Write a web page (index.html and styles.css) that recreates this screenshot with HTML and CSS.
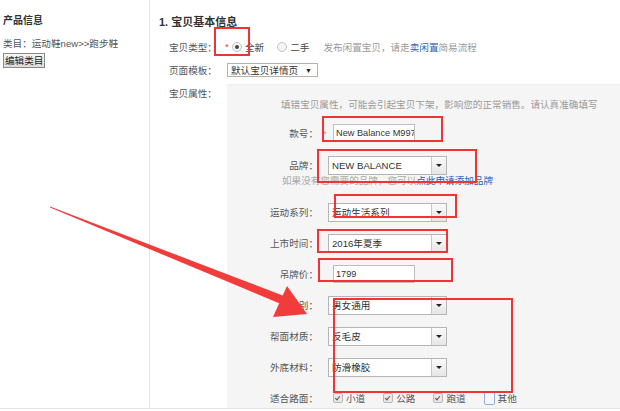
FILE: index.html
```html
<!DOCTYPE html>
<html lang="zh-CN">
<head>
  <meta charset="UTF-8">
  <title>发布宝贝</title>
  <link rel="stylesheet" href="styles.css">
</head>
<body>

  <div class="page">
    <div class="side">
      <h4 class="side__title">产品信息</h4>
      <p class="side__cat">类目：运动鞋new&gt;&gt;跑步鞋</p>
      <button class="btn-edit">编辑类目</button>
    </div>

    <div class="main">
      <h3 class="main__title">1. 宝贝基本信息</h3>

      <div class="row row--type">
        <span class="row__label">宝贝类型：</span>
        <span class="req">*</span>
        <span class="radio radio--on"></span><span class="opt">全新</span>
        <span class="radio"></span><span class="opt">二手</span>
        <span class="tip">发布闲置宝贝，请走<a class="link">卖闲置</a>简易流程</span>
      </div>

      <div class="row row--tpl">
        <span class="row__label">页面模板：</span>
        <span class="tpl-select">默认宝贝详情页<i class="tpl-arrow">▼</i></span>
      </div>

      <div class="props">
        <span class="row__label props__label">宝贝属性：</span>
        <div class="panel">
          <p class="panel__tip">填错宝贝属性，可能会引起宝贝下架，影响您的正常销售。请认真准确填写</p>

          <div class="field field--first">
            <span class="field__label">款号：</span>
            <span class="field__star">*</span>
            <span class="text-input">New Balance M997</span>
          </div>

          <div class="field field--brand">
            <span class="field__label">品牌：</span>
            <span class="select select--latin">NEW BALANCE<i class="select__btn"></i></span>
          </div>
          <p class="brand-tip">如果没有您需要的品牌，您可以<a class="link">点此申请添加品牌</a></p>

          <div class="field field--series">
            <span class="field__label">运动系列：</span>
            <span class="select">运动生活系列<i class="select__btn"></i></span>
          </div>

          <div class="field">
            <span class="field__label">上市时间：</span>
            <span class="select">2016年夏季<i class="select__btn"></i></span>
          </div>

          <div class="field">
            <span class="field__label">吊牌价：</span>
            <span class="field__star"></span>
            <span class="text-input">1799</span>
          </div>

          <div class="field">
            <span class="field__label">性别：</span>
            <span class="select">男女通用<i class="select__btn"></i></span>
          </div>

          <div class="field">
            <span class="field__label">帮面材质：</span>
            <span class="select">反毛皮<i class="select__btn"></i></span>
          </div>

          <div class="field">
            <span class="field__label">外底材料：</span>
            <span class="select">防滑橡胶<i class="select__btn"></i></span>
          </div>

          <div class="field">
            <span class="field__label">适合路面：</span>
            <span class="checks">
              <span class="check check--on"></span><span class="check__text">小道</span>
              <span class="check check--on"></span><span class="check__text">公路</span>
              <span class="check check--on"></span><span class="check__text">跑道</span>
              <span class="check check--focus"></span><span class="check__text">其他</span>
            </span>
          </div>
        </div>
      </div>
    </div>
  </div>

  <!-- annotations drawn over the screenshot -->
  <div class="mark" style="left:214px; top:27px; width:32px; height:25px;"></div>
  <div class="mark" style="left:322px; top:116px; width:117px; height:22px;"></div>
  <div class="mark" style="left:317px; top:149px; width:156px; height:30px;"></div>
  <div class="mark" style="left:334px; top:194px; width:119px; height:20px;"></div>
  <div class="mark" style="left:317px; top:229px; width:127px; height:20px;"></div>
  <div class="mark" style="left:318px; top:258px; width:131px; height:20px;"></div>
  <div class="mark" style="left:333px; top:298px; width:176px; height:91px;"></div>

  <svg class="arrow" width="620" height="411" viewBox="0 0 620 411">
    <polygon points="50,206.5 284,296 281,304 50,207.5" fill="#f23b3b"/>
    <polygon points="307,314 273,317 287,286" fill="#f23b3b"/>
  </svg>

</body>
</html>
```

FILE: styles.css
```css
body {
  margin: 0;
  position: relative;
  width: 620px;
  height: 411px;
  overflow: hidden;
  background: #fff;
  font-family: "Liberation Sans", "Noto Sans CJK SC", sans-serif;
  font-size: 9.6px;
  color: #444;
}

p, h3, h4 {
  margin: 0;
}

.link {
  color: #2f5fb8;
}

.page {
  display: flex;
  height: 408px;
  border-bottom: 1px solid #e3e3e3;
}

/* left column */
.side {
  width: 150px;
  padding: 15px 0 0 3px;
  box-sizing: border-box;
  border-right: 1px solid #dfe5f0;
}

.side__title {
  font-size: 10px;
  font-weight: bold;
  color: #333;
  line-height: 12px;
}

.side__cat {
  margin-top: 11px;
  line-height: 12px;
  color: #555;
}

.btn-edit {
  margin-top: 3px;
  padding: 0 1px;
  height: 15px;
  font-family: inherit;
  font-size: 9.6px;
  line-height: 13px;
  color: #222;
  border: 1px solid #8a8a8a;
  background: linear-gradient(#f6f6f6, #dcdcdc);
}

/* right column */
.main {
  flex: 1;
  display: flex;
  flex-direction: column;
  padding-left: 9px;
}

.main__title {
  margin-top: 15px;
  font-size: 11px;
  line-height: 14px;
  font-weight: bold;
  color: #333;
}

.row {
  display: flex;
  align-items: center;
  padding-left: 10px;
}

.row__label {
  width: 58px;
  flex-shrink: 0;
  color: #555;
}

.row--type {
  margin-top: 8px;
  height: 20px;
}

.row--type .row__label {
  width: 56px;
}

.req {
  color: #e33;
  width: 7px;
}

.radio {
  width: 8px;
  height: 8px;
  border: 1px solid #c3c3c3;
  border-radius: 50%;
  background: #f4f4f4;
  position: relative;
}

.radio--on::after {
  content: "";
  position: absolute;
  left: 2px;
  top: 2px;
  width: 4px;
  height: 4px;
  border-radius: 50%;
  background: #444;
}

.opt {
  margin: 0 13px 0 3px;
  color: #444;
}

.tip {
  margin-left: 1px;
  color: #999;
}

.row--tpl {
  margin-top: 4px;
  height: 20px;
}

.tpl-select {
  display: flex;
  align-items: center;
  width: 91px;
  height: 14px;
  box-sizing: border-box;
  padding-left: 3px;
  border: 1px solid #b2b2b2;
  background: #fff;
  color: #333;
}

.tpl-arrow {
  font-style: normal;
  font-size: 7px;
  margin-left: auto;
  margin-right: 5px;
  color: #222;
}

.props {
  flex: 1;
  display: flex;
  margin-top: 4px;
  padding-left: 10px;
}

.props__label {
  margin-top: 4px;
  line-height: 12px;
}

.panel {
  flex: 1;
  background: #f5f5f5;
  border-top: 1px solid #eee;
  padding-top: 13px;
}

.panel__tip {
  padding-left: 54px;
  line-height: 14px;
  color: #9a9a9a;
}

.field {
  display: flex;
  align-items: center;
  height: 20px;
  margin-top: 11px;
}

.field--first {
  margin-top: 11px;
}

.field--brand {
  margin-top: 12px;
}

.field--series {
  margin-top: 15px;
}

.field__label {
  width: 91px;
  text-align: right;
  color: #555;
  flex-shrink: 0;
}

.field__star {
  width: 15px;
  padding-left: 5px;
  box-sizing: border-box;
  color: #f08080;
}

.brand-tip {
  padding-left: 55px;
  line-height: 12px;
  color: #aaa;
}

.text-input {
  display: flex;
  align-items: center;
  width: 82px;
  height: 18px;
  box-sizing: border-box;
  padding-left: 2px;
  border: 1px solid #bdbdbd;
  background: #fff;
  color: #333;
  font-size: 9.2px;
  white-space: nowrap;
  overflow: hidden;
}

.select {
  display: flex;
  align-items: center;
  margin-left: 10px;
  width: 119px;
  height: 19px;
  box-sizing: border-box;
  padding-left: 3px;
  border: 1px solid #b5b5b5;
  background: #fff;
  color: #333;
  position: relative;
}

.select--latin {
  font-size: 9.6px;
}

.select__btn {
  position: absolute;
  right: 0;
  top: 0;
  width: 14px;
  height: 17px;
  border-left: 1px solid #c8c8c8;
  background: linear-gradient(#fafafa, #e6e6e6);
}

.select__btn::after {
  content: "";
  position: absolute;
  left: 4px;
  top: 7px;
  border-left: 3px solid transparent;
  border-right: 3px solid transparent;
  border-top: 3px solid #222;
}

.checks {
  display: flex;
  align-items: center;
  margin-left: 15px;
}

.check {
  width: 8px;
  height: 8px;
  border: 1px solid #b8b8b8;
  background: #e8e8e8;
  border-radius: 2px;
  position: relative;
}

.check--on::after {
  content: "";
  position: absolute;
  left: 2px;
  top: 1px;
  width: 2px;
  height: 4px;
  border-right: 1px solid #555;
  border-bottom: 1px solid #555;
  transform: rotate(40deg);
}

.check--focus {
  width: 9px;
  height: 12px;
  border-color: #8fb0e0;
  background: #f4f7fc;
}

.check__text {
  margin: 0 18px 0 3px;
  color: #555;
}

/* annotations */
.mark {
  position: absolute;
  border: 2px solid #f03434;
}

.arrow {
  position: absolute;
  left: 0;
  top: 0;
}
```
